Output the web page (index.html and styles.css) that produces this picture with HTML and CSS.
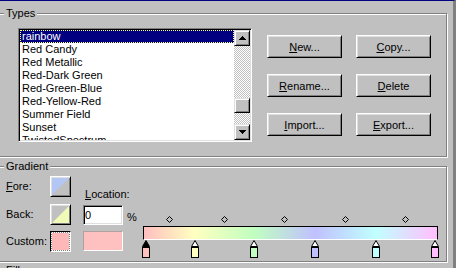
FILE: index.html
```html
<!DOCTYPE html>
<html lang="en">
<head>
    <meta charset="UTF-8">
    <meta name="viewport" content="width=device-width, initial-scale=1.0">
    <title>Gradient Types</title>
    <link rel="stylesheet" href="styles.css">
</head>
<body>
    <div class="page">
        <!-- Types group -->
        <div class="group types">
            <span class="legend">Types</span>
            <div class="listbox">
                <ul class="items">
                    <li class="selected">rainbow</li>
                    <li>Red Candy</li>
                    <li>Red Metallic</li>
                    <li>Red-Dark Green</li>
                    <li>Red-Green-Blue</li>
                    <li>Red-Yellow-Red</li>
                    <li>Summer Field</li>
                    <li>Sunset</li>
                    <li>TwistedSpectrum</li>
                </ul>
                <div class="scrollbar">
                    <div class="sb-btn">
                        <svg width="7" height="4" viewBox="0 0 7 4"><path d="M3 0h1v1h1v1h1v1h1v1H0V3h1V2h1V1h1z"/></svg>
                    </div>
                    <div class="track" style="height: 52px"></div>
                    <div class="sb-btn thumb"></div>
                    <div class="track rest"></div>
                    <div class="sb-btn">
                        <svg width="7" height="4" viewBox="0 0 7 4"><path d="M0 0h7v1H6v1H5v1H4v1H3V3H2V2H1V1H0z"/></svg>
                    </div>
                </div>
            </div>
            <div class="actions">
                <button type="button"><u>N</u>ew...</button>
                <button type="button"><u>C</u>opy...</button>
                <button type="button"><u>R</u>ename...</button>
                <button type="button"><u>D</u>elete</button>
                <button type="button"><u>I</u>mport...</button>
                <button type="button"><u>E</u>xport...</button>
            </div>
        </div>

        <!-- Gradient group -->
        <div class="group gradient">
            <span class="legend">Gradient</span>
            <div class="grad-grid">
                <span class="lbl row1"><u>F</u>ore:</span>
                <div class="color-btn row1">
                    <svg width="17" height="17" viewBox="0 0 17 17"><polygon points="0,0 17,0 0,17" fill="#b4c6f4"/></svg>
                </div>
                <span class="loc-lbl"><u>L</u>ocation:</span>

                <span class="lbl row2">Back:</span>
                <div class="color-btn row2">
                    <svg width="17" height="17" viewBox="0 0 17 17"><polygon points="17,0 17,17 0,17" fill="#f2fab8"/></svg>
                </div>
                <input class="loc-input" type="text" value="0">
                <span class="pct">%</span>

                <span class="lbl row3">Custom:</span>
                <div class="custom-swatch"><div class="custom-fill"></div></div>
                <div class="custom-big"></div>

                <div class="editor">
                    <div class="marks">
                        <svg class="diamond" style="left: 23px" width="7" height="7" viewBox="0 0 7 7"><polygon points="3.5,0.5 6.5,3.5 3.5,6.5 0.5,3.5"/></svg>
                        <svg class="diamond" style="left: 78px" width="7" height="7" viewBox="0 0 7 7"><polygon points="3.5,0.5 6.5,3.5 3.5,6.5 0.5,3.5"/></svg>
                        <svg class="diamond" style="left: 138px" width="7" height="7" viewBox="0 0 7 7"><polygon points="3.5,0.5 6.5,3.5 3.5,6.5 0.5,3.5"/></svg>
                        <svg class="diamond" style="left: 199px" width="7" height="7" viewBox="0 0 7 7"><polygon points="3.5,0.5 6.5,3.5 3.5,6.5 0.5,3.5"/></svg>
                        <svg class="diamond" style="left: 259px" width="7" height="7" viewBox="0 0 7 7"><polygon points="3.5,0.5 6.5,3.5 3.5,6.5 0.5,3.5"/></svg>
                    </div>
                    <div class="bar"></div>
                    <div class="stops">
                        <svg class="stop active" style="left: -1px" width="8" height="18" viewBox="0 0 8 18"><path class="tip" d="M4 0.5L7.5 6.5H0.5Z"/><rect x="0.5" y="7.5" width="7" height="10" fill="#ffc0c0"/></svg>
                        <svg class="stop" style="left: 48px" width="8" height="18" viewBox="0 0 8 18"><path class="tip" d="M4 0.5L7.5 6.5H0.5Z"/><rect x="0.5" y="7.5" width="7" height="10" fill="#ffffc0"/></svg>
                        <svg class="stop" style="left: 107px" width="8" height="18" viewBox="0 0 8 18"><path class="tip" d="M4 0.5L7.5 6.5H0.5Z"/><rect x="0.5" y="7.5" width="7" height="10" fill="#c0ffc0"/></svg>
                        <svg class="stop" style="left: 168px" width="8" height="18" viewBox="0 0 8 18"><path class="tip" d="M4 0.5L7.5 6.5H0.5Z"/><rect x="0.5" y="7.5" width="7" height="10" fill="#c0c0ff"/></svg>
                        <svg class="stop" style="left: 229px" width="8" height="18" viewBox="0 0 8 18"><path class="tip" d="M4 0.5L7.5 6.5H0.5Z"/><rect x="0.5" y="7.5" width="7" height="10" fill="#c0ffff"/></svg>
                        <svg class="stop" style="left: 288px" width="8" height="18" viewBox="0 0 8 18"><path class="tip" d="M4 0.5L7.5 6.5H0.5Z"/><rect x="0.5" y="7.5" width="7" height="10" fill="#ffc0ff"/></svg>
                    </div>
                </div>
            </div>
        </div>

        <!-- Next group, cut off by the window -->
        <div class="group next">
            <span class="legend">Fill</span>
        </div>
    </div>
</body>
</html>
```

FILE: styles.css
```css
/* Page */
body {
    margin: 0;
    background: #c0c0c0;
    font-family: 'Liberation Sans', Arial, sans-serif;
    font-size: 11px;
    color: #000;
}
.page {
    box-sizing: border-box;
    width: 456px;
    height: 268px;
    overflow: hidden;
    border-top: 1px solid #000080;
    border-right: 3px solid #808080;
    padding-top: 12px;
}

/* Etched group boxes */
.group {
    position: relative;
    box-sizing: border-box;
    width: 449px;
    margin-left: -2px;
    border: 1px solid #808080;
    box-shadow: inset 1px 1px 0 #fff, 1px 1px 0 #fff;
}
.legend {
    position: absolute;
    top: -7px;
    left: 5px;
    padding: 0 2px;
    line-height: 13px;
    background: #c0c0c0;
}

/* Types */
.types {
    height: 144px;
    display: flex;
    align-items: flex-start;
    padding: 14px 0 0 19px;
}
.listbox {
    box-sizing: border-box;
    display: flex;
    width: 234px;
    height: 114px;
    padding: 1px;
    border: 1px solid;
    border-color: #808080 #fff #fff #808080;
    box-shadow: inset 1px 1px 0 #000, inset -1px -1px 0 #dfdfdf;
}
.items {
    flex: 1;
    margin: 0;
    padding: 0;
    list-style: none;
    background: #fff;
    overflow: hidden;
}
.items li {
    height: 13px;
    line-height: 13px;
    padding-left: 2px;
    white-space: nowrap;
}
.items li.selected {
    background: #000080;
    color: #fff;
    outline: 1px dotted #ffff80;
    outline-offset: -1px;
}
.scrollbar {
    display: flex;
    flex-direction: column;
    width: 16px;
}
.sb-btn {
    box-sizing: border-box;
    display: flex;
    align-items: center;
    justify-content: center;
    height: 16px;
    background: #c0c0c0;
    border: 1px solid;
    border-color: #dfdfdf #000 #000 #dfdfdf;
    box-shadow: inset 1px 1px 0 #fff, inset -1px -1px 0 #808080;
}
.sb-btn svg {
    display: block;
}
.sb-btn.thumb {
    height: 15px;
}
.track {
    background: repeating-conic-gradient(#fff 0 25%, #c0c0c0 0 50%) 0 0 / 2px 2px;
}
.track.rest {
    flex: 1;
}

.actions {
    display: grid;
    grid-template-columns: 75px 75px;
    grid-auto-rows: 23px;
    column-gap: 14px;
    row-gap: 16px;
    margin: 7px 0 0 15px;
}
button {
    padding: 0;
    font-family: inherit;
    font-size: 11px;
    color: #000;
    background: #c0c0c0;
    border: 1px solid;
    border-color: #fff #000 #000 #fff;
    box-shadow: inset 1px 1px 0 #dfdfdf, inset -1px -1px 0 #808080;
}

/* Gradient */
.gradient {
    height: 96px;
    margin-top: 9px;
    padding: 9px 0 0 7px;
}
.grad-grid {
    display: grid;
    grid-template-columns: 44px 21px 12px 40px 20px 295px;
    grid-template-rows: 28px 27px 21px;
}
.row1 { grid-row: 1; }
.row2 { grid-row: 2; }
.row3 { grid-row: 3; }
.lbl {
    grid-column: 1;
    height: 21px;
    line-height: 20px;
}
.color-btn {
    grid-column: 2;
    box-sizing: border-box;
    width: 21px;
    height: 21px;
    padding: 1px;
    background: #c0c0c0;
    border: 1px solid;
    border-color: #fff #000 #000 #fff;
    box-shadow: inset 1px 1px 0 #dfdfdf, inset -1px -1px 0 #808080;
}
.color-btn svg {
    display: block;
}
.custom-swatch {
    grid-column: 2;
    grid-row: 3;
    box-sizing: border-box;
    width: 21px;
    height: 21px;
    padding: 1px;
    border: 1px solid;
    border-color: #000 #fff #fff #000;
    background: repeating-conic-gradient(#fff 0 25%, #808080 0 50%) 0 0 / 2px 2px;
}
.custom-fill {
    width: 100%;
    height: 100%;
    background: #ffb8b8;
}
.loc-lbl {
    grid-column: 4 / span 2;
    grid-row: 1;
    align-self: end;
    margin-bottom: 3px;
    padding-left: 2px;
    line-height: 13px;
    white-space: nowrap;
}
.loc-input {
    grid-column: 4;
    grid-row: 2;
    box-sizing: border-box;
    width: 40px;
    height: 20px;
    margin: 1px 0 0;
    padding: 0 0 0 1px;
    font-family: inherit;
    font-size: 11px;
    background: #fff;
    border: 1px solid;
    border-color: #808080 #fff #fff #808080;
    box-shadow: inset 1px 1px 0 #000, inset -1px -1px 0 #dfdfdf;
    outline: none;
}
.pct {
    grid-column: 5;
    grid-row: 2;
    padding: 7px 0 0 4px;
    line-height: 13px;
}
.custom-big {
    grid-column: 4;
    grid-row: 3;
    box-sizing: border-box;
    width: 40px;
    height: 20px;
    background: #ffc0c0;
    border: 1px solid;
    border-color: #b0a0a0 #fff #fff #b0a0a0;
}

/* Gradient editor */
.editor {
    grid-column: 6;
    grid-row: 2 / 4;
    align-self: start;
}
.marks {
    position: relative;
    height: 22px;
}
.diamond {
    position: absolute;
    top: 12px;
    fill: none;
    stroke: #000;
}
.bar {
    box-sizing: border-box;
    height: 14px;
    border: 1px solid #000;
    border-bottom-color: #fff;
    background: linear-gradient(to right,
        #ffc0c0 1px, #ffffc0 50px, #c0ffc0 110px,
        #c0c0ff 171px, #c0ffff 232px, #ffc0ff 291px);
}
.stops {
    position: relative;
    height: 18px;
}
.stop {
    position: absolute;
    top: 0;
    stroke: #000;
    shape-rendering: crispEdges;
}
.stop .tip {
    fill: #fff;
    shape-rendering: auto;
}
.stop.active .tip {
    fill: #000;
}

.next {
    height: 40px;
    margin-top: 8px;
}
```
